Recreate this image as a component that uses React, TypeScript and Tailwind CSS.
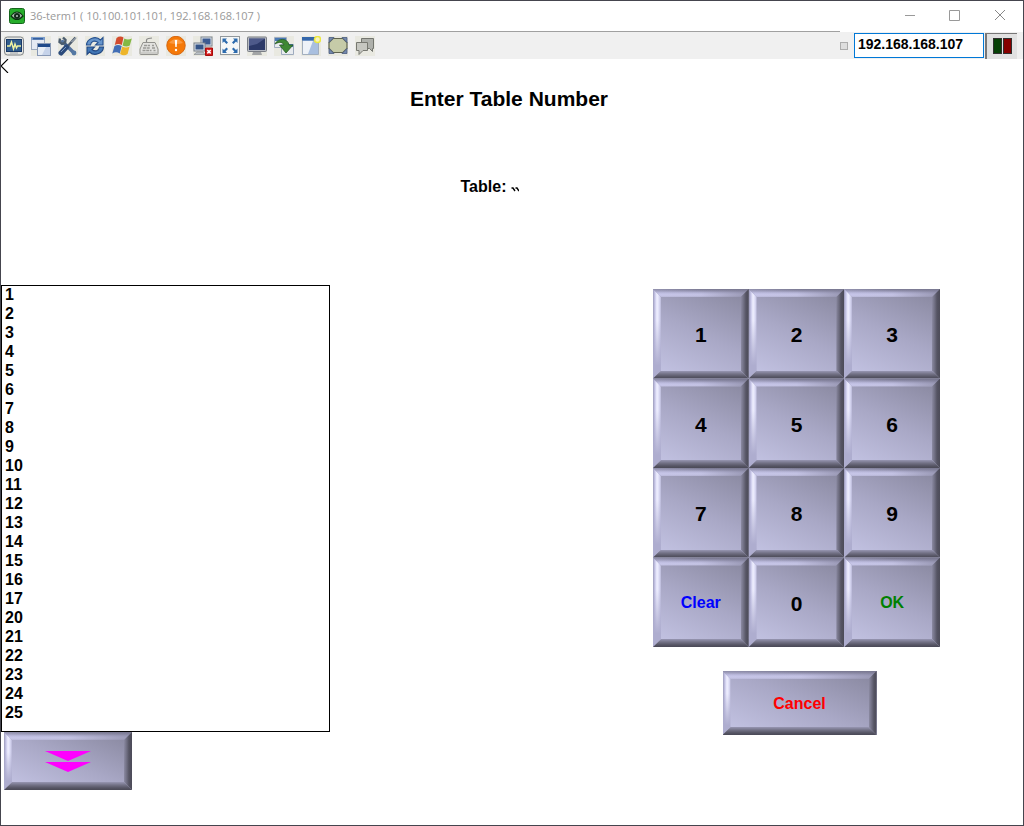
import type { ReactNode } from "react";

const tables = [
  "1", "2", "3", "4", "5", "6", "7", "8", "9", "10", "11", "12",
  "13", "14", "15", "16", "17", "20", "21", "22", "23", "24", "25",
];

const keys = [
  { label: "1", style: "text-[21px] text-black" },
  { label: "2", style: "text-[21px] text-black" },
  { label: "3", style: "text-[21px] text-black" },
  { label: "4", style: "text-[21px] text-black" },
  { label: "5", style: "text-[21px] text-black" },
  { label: "6", style: "text-[21px] text-black" },
  { label: "7", style: "text-[21px] text-black" },
  { label: "8", style: "text-[21px] text-black" },
  { label: "9", style: "text-[21px] text-black" },
  { label: "Clear", style: "text-[16px] text-[#0000ff]" },
  { label: "0", style: "text-[21px] text-black" },
  { label: "OK", style: "text-[16px] text-[#008000]" },
];

function BevelButton({ children, className, label }: { children: ReactNode; className: string; label?: string }) {
  return (
    <button
      type="button"
      aria-label={label}
      className={`relative flex items-center justify-center bg-[linear-gradient(25deg,#c6c6e6_0%,#a9a8c6_50%,#86859c_100%)] pt-[2px] font-bold ${className}`}
    >
      <span className="absolute inset-y-0 left-0 w-2 bg-[linear-gradient(to_right,#9c9bbb_0px,#c9c8ea_2px,#f0f0ff_4px,#dcdcf6_6px,#b9b8d8_8px)] [clip-path:polygon(0_0,100%_8px,100%_calc(100%-8px),0_100%)]">
        <span className="absolute inset-0 bg-[linear-gradient(to_bottom,transparent_35%,#aeadcf_85%)]" />
      </span>
      <span className="absolute inset-x-0 top-0 h-2 bg-[linear-gradient(to_bottom,#77768e_0px,#9493b0_2px,#b9b8da_4px,#c6c5e6_6px,#b4b3d2_8px)] [clip-path:polygon(0_0,100%_0,calc(100%-8px)_100%,8px_100%)]">
        <span className="absolute inset-0 bg-[linear-gradient(to_right,#d2d1f840_0%,transparent_50%,#77768e90_100%)]" />
      </span>
      <span className="absolute inset-y-0 right-0 w-2 bg-[linear-gradient(to_left,#4c4b58_0px,#555463_3px,#6c6b7e_5px,#8b8aa2_8px)] [clip-path:polygon(100%_0,100%_100%,0_calc(100%-8px),0_8px)]" />
      <span className="absolute inset-x-0 bottom-0 h-2 bg-[linear-gradient(to_top,#4a4956_0px,#555463_2px,#737286_5px,#9796b2_8px)] [clip-path:polygon(0_100%,100%_100%,calc(100%-8px)_0,8px_0)]" />
      <span className="relative">{children}</span>
    </button>
  );
}

const icons: { name: string; art: ReactNode }[] = [
  {
    name: "Monitor activity",
    art: (
      <>
        <rect x="0.5" y="1" width="19" height="18" rx="3" fill="#e5e6e2" stroke="#82868d" />
        <rect x="2.5" y="3.5" width="15" height="12" fill="#315d8e" stroke="#183867" />
        <path d="M3 10h3l1.5-4 2 7 1.5-5 1.5 4 1-2h3.5" fill="none" stroke="#f1f4a0" strokeWidth="1.4" />
        <path d="M6 17h8" stroke="#9da2a8" />
      </>
    ),
  },
  {
    name: "Copy windows",
    art: (
      <>
        <rect x="0.5" y="1.5" width="13" height="12" fill="#e4e9f3" stroke="#9ca9bd" />
        <path d="M0 1h14v3H0z" fill="#7c9ccb" />
        <path d="M2 2h10v1.500H2z" fill="#345f9f" />
        <rect x="6.5" y="7.500" width="13" height="12" fill="#c6d3ea" stroke="#8798b5" />
        <path d="M7 8h12v3H7z" fill="#1e488a" />
        <path d="M7 11h8l-4 8H7z" fill="#f4f6fa" opacity=".7" />
      </>
    ),
  },
  {
    name: "Tools",
    art: (
      <>
        <path d="M4.500 5.500 16 17" stroke="#56749f" strokeWidth="3.500" strokeLinecap="round" />
        <path d="M2 2.500 1.500 6 4 8l3-1 .5-3L5 1.500" fill="none" stroke="#4b5c6e" strokeWidth="2.400" />
        <path d="m17.500 1.500-9 10" stroke="#505e70" strokeWidth="2.500" />
        <path d="m18.500 1-5 5" stroke="#c2c9d1" />
        <path d="m8.500 11-5.500 6" stroke="#2c4b7c" strokeWidth="5" strokeLinecap="round" />
        <path d="m8 11-5 5" stroke="#7c98c0" />
        <circle cx="16" cy="17" r="2.400" fill="#5478a4" />
      </>
    ),
  },
  {
    name: "Refresh",
    art: (
      <>
        <path d="M1.500 9C2 2 11-.5 15.500 4L18 1.500V9h-7.500L13 6.500C10 4 6 5 5.500 9z" fill="#6795cc" stroke="#254f8e" strokeWidth="1.100" />
        <path d="M18.500 11c-.5 7-9.500 9.500-14 5L2 18.500V11h7.500L7 13.500c3 2.500 7 1.500 7.500-2.500z" fill="#4277b6" stroke="#214782" strokeWidth="1.100" />
      </>
    ),
  },
  {
    name: "Windows",
    art: (
      <>
        <path d="M4.500 2q3.500-2.500 7-.5L9.800 9q-3.500-2-7 0z" fill="#d34b2d" />
        <path d="M12.300 2.500q3.500 2 7.500 0l-2 7q-3.500 2-7.200 0z" fill="#83b844" />
        <path d="M2.500 10q3.500-2 7.200 0L7.800 17.500Q4 15 .3 17.500z" fill="#426eb5" />
        <path d="M10.300 10.500q3.500 2 7.300 0l-2 7.500q-3.500 2.500-7.500 0z" fill="#edb52b" />
      </>
    ),
  },
  {
    name: "Keyboard",
    art: (
      <>
        <path d="M7.500 7V4q0-1 2-1.500L13 2" fill="none" stroke="#888" strokeWidth="1.200" />
        <path d="M4 6.500h12l3 6.500v4.500q0 1-1 1H2q-1 0-1-1V13z" fill="#e2e2df" stroke="#92928e" />
        <path d="M5 9.500h6m2 0h2M4 12h7m2 0h3M3.500 14.500h9m2 0h2" stroke="#9a9a96" strokeWidth="1.300" strokeDasharray="3 .7" />
        <path d="M2 17h16" stroke="#b6b6b2" />
      </>
    ),
  },
  {
    name: "Alert",
    art: (
      <>
        <circle cx="10" cy="9.500" r="9.200" fill="#f57909" stroke="#d76712" />
        <path d="M3 7q7-8 14 0-6 2-14 0z" fill="#ffad62" opacity=".6" />
        <path d="M8.800 4h2.400l-.5 7H9.300z" fill="white" />
        <circle cx="10" cy="14" r="1.200" fill="white" />
      </>
    ),
  },
  {
    name: "Disconnect",
    art: (
      <>
        <rect x="8" y="1" width="11" height="9" fill="#dbe2ea" stroke="#7e8690" />
        <path d="M9.500 2.500h8v6h-8z" fill="#3b5a91" />
        <rect x="1" y="7" width="11" height="8" fill="#dbe2ea" stroke="#777f8a" />
        <path d="M2.500 8.500h8v5h-8z" fill="#345488" />
        <path d="M4 16h6l2 2.500H1z" fill="#bac0c7" stroke="#7f8388" strokeWidth=".6" />
        <path d="M12.500 12h7v7.500h-7z" fill="#d11b1b" stroke="#a90b0b" />
        <path d="m14.300 14 3.400 3.400m0-3.400-3.400 3.400" stroke="white" strokeWidth="1.500" />
      </>
    ),
  },
  {
    name: "Full screen",
    art: (
      <>
        <rect x=".5" y=".5" width="19" height="18" fill="#f5f7f7" stroke="#92989c" />
        <path d="M2.500 2.500h4.500L5.600 4 8 6.500 6.500 8 4 5.500 2.500 7zM17.500 2.500H13L14.400 4 12 6.500 13.500 8 16 5.500 17.500 7zM2.500 17h4.500l-1.400-1.500L8 13l-1.500-1.500L4 14l-1.500-1.500zM17.500 17H13l1.400-1.500L12 13l1.500-1.500L16 14l1.500-1.500z" fill="#2c6bae" />
      </>
    ),
  },
  {
    name: "Display",
    art: (
      <>
        <rect x=".5" y="1" width="19" height="14.500" rx="1" fill="#b8bcc4" stroke="#7a7e86" />
        <path d="M2 2.500h16V14H2z" fill="#2c3968" />
        <path d="M2 2.500h16L10 8l-8 2z" fill="#6572a1" opacity=".6" />
        <path d="M6 16h8l1 3H5z" fill="#a2a4a6" />
      </>
    ),
  },
  {
    name: "Send window",
    art: (
      <>
        <path d="M.5 1.500h12v10H.5zM7.500 8.500h12v10h-12z" fill="#e8ebef" stroke="#9eabbe" />
        <path d="M1 2h11v3H1zM13 8h6v3h-6z" fill="#4979b5" />
        <path d="M1 8C4 1.500 14 2 15 9h4l-7 8-6.500-8H10C9 6 5 5.500 1 8z" fill="#3f8834" stroke="#285b25" strokeWidth=".8" />
      </>
    ),
  },
  {
    name: "New window",
    art: (
      <>
        <path d="M1.500 1.500h16v17h-16z" fill="#a9bfdf" stroke="#a2aebe" />
        <path d="M2 5h10L7 18H2z" fill="#eef2f8" />
        <path d="M1 1h17v3.500H1z" fill="#3567ab" />
        <circle cx="16.500" cy="3.500" r="3" fill="#f7f3c0" stroke="#ede83f" strokeWidth="1.500" />
      </>
    ),
  },
  {
    name: "Resize",
    art: (
      <>
        <path d="M3.500 3h13v13h-13z" fill="#c4caa5" />
        <path d="M5 2.500h10l4 4v6l-4 4H5l-4-4v-6z" fill="#c6cba8" stroke="#60644f" strokeWidth="1.200" />
        <path d="M1 1.500h5L1 6.500zM14 1.500h5v5zM1 12.500l5 5H1zM19 12.500v5h-5z" fill="#7389ad" stroke="#4b5c7d" strokeWidth=".8" />
      </>
    ),
  },
  {
    name: "Messages",
    art: (
      <>
        <path d="M6.500 2.500h12v10h-1v3l-3-3h-8z" fill="#aeb0ab" stroke="#73756f" />
        <path d="M1.500 6.500h11v8H8l-4 4v-4H1.500z" fill="#c6c7c1" stroke="#777871" />
      </>
    ),
  },
];

export default function App() {
  return (
    <div className="flex min-h-screen flex-col border border-[#45454e] bg-white font-['Liberation_Sans',Arial,sans-serif] text-black">
      <header>
        <div className="flex h-[30px] items-center justify-between pl-2">
          <div className="flex items-center gap-[5px]">
            <svg viewBox="0 0 16 16" className="size-4" aria-hidden="true">
              <rect x=".5" y=".5" width="15" height="15" rx="2" fill="#26ad2b" stroke="#15651c" />
              <path d="M2 8q6-8 12 0-6 7-12 0z" fill="#a7b9aa" stroke="#092f0e" strokeWidth="1.200" />
              <circle cx="8" cy="8" r="3" fill="#12291a" />
              <circle cx="8" cy="8" r="1" fill="#b5c6bc" />
            </svg>
            <span className="font-['Open_Sans',sans-serif] text-[11px] text-[#999999]">36-term1 ( 10.100.101.101, 192.168.168.107 )</span>
          </div>
          <div className="flex h-full">
            <button type="button" aria-label="Minimize" className="flex w-[45px] items-center justify-center">
              <svg viewBox="0 0 12 12" className="size-3" fill="none" stroke="#999"><path d="M1 5.500h10" /></svg>
            </button>
            <button type="button" aria-label="Maximize" className="flex w-[45px] items-center justify-center">
              <svg viewBox="0 0 12 12" className="size-3" fill="none" stroke="#999"><path d="M.5.5h10v10H.5z" /></svg>
            </button>
            <button type="button" aria-label="Close" className="flex w-[46px] items-center justify-center">
              <svg viewBox="0 0 12 12" className="size-3" fill="none" stroke="#888"><path d="m1 0 10 10M11 0 1 10" /></svg>
            </button>
          </div>
        </div>
        <div className="mr-[183px] h-px bg-[#a0a0a0]" />
        <div className="flex h-[27px] items-center justify-between bg-[#f0f0f0] pl-[3px] pr-[6px]">
          <nav className="flex gap-[7px]" aria-label="Tools">
            {icons.map((icon) => (
              <button key={icon.name} type="button" aria-label={icon.name} className="size-5 bg-[#e9e9e1]">
                <svg viewBox="0 0 20 20" className="size-5">{icon.art}</svg>
              </button>
            ))}
          </nav>
          <div className="flex items-center">
            <span className="mr-[6px] size-2 border border-[#adadad] bg-[#dedede]" />
            <input
              aria-label="Address"
              defaultValue="192.168.168.107"
              className="h-[25px] w-[130px] border border-solid border-[#0078d7] bg-white px-[3px] pb-1 text-[14px] font-bold leading-5 outline-none"
            />
            <div className="ml-px flex h-[26px] w-[32px] items-center justify-center border-l-2 border-t border-[#777777] bg-[#e1e1e1]">
              <span className="h-4 w-[9px] border border-[#303030] bg-[#064006]" />
              <span className="ml-px h-4 w-[9px] border border-[#303030] bg-[#850000]" />
            </div>
          </div>
        </div>
      </header>

      <main className="flex-1">
        <section className="h-[226px]">
          <button type="button" aria-label="Back" className="block">
            <svg viewBox="0 0 8 14" className="h-[14px] w-2" fill="none" stroke="black" strokeWidth="1.100"><path d="M7 0 0 7l7 7" /></svg>
          </button>
          <h1 className="mt-[14px] pr-[6px] text-center text-[21px] font-bold leading-6">Enter Table Number</h1>
          <div className="mt-[66px] flex items-end justify-center gap-[5px] pr-[44px] text-[16px] font-bold leading-5">
            <span>Table:</span>
            <svg viewBox="0 0 8 6" className="mb-1 h-[6px] w-2" fill="none" stroke="black"><path d="M.5 1h1.500l2 3M4.500 1H6l2 3" strokeWidth="1.400" /></svg>
          </div>
        </section>

        <div className="flex items-start justify-between pr-[83px]">
          <section>
            <div className="h-[447px] w-[329px] border border-black">
              <ul className="-mt-px pl-[3px] text-[16px] font-bold leading-[19px]">
                {tables.map((table) => (
                  <li key={table}>{table}</li>
                ))}
              </ul>
            </div>
            <BevelButton label="Scroll down" className="ml-[3px] h-[58px] w-[128px]">
              <svg viewBox="0 0 48 22" className="h-[22px] w-12" fill="#ff00ff"><path d="M1 0h46L24 10zM1 11h46L24 21z" /></svg>
            </BevelButton>
          </section>

          <section className="mt-1 flex flex-col items-center">
            <div className="grid h-[358px] w-[287px] grid-cols-3 grid-rows-4">
              {keys.map((key) => (
                <BevelButton key={key.label} className={key.style}>{key.label}</BevelButton>
              ))}
            </div>
            <BevelButton className="ml-[6px] mt-6 h-16 w-[154px] text-[16px] text-[#ff0000]">Cancel</BevelButton>
          </section>
        </div>
      </main>
    </div>
  );
}
